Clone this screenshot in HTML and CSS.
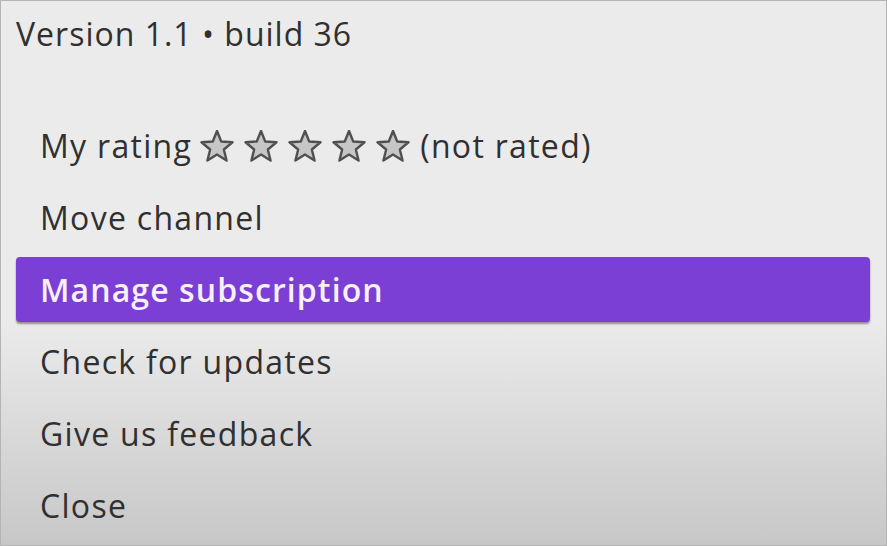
FILE: index.html
```html
<!DOCTYPE html>
<html>
<head>
<meta charset="utf-8">
<link rel="stylesheet" href="styles.css">
</head>
<body>
<div class="screen">
  <div class="version">Version 1.1 • build 36</div>
  <ul class="menu">
    <li class="item"><span>My rating</span><span class="stars"><svg class="star" viewBox="0 0 34 32"><path d="M17 1 L21.23 11.48 L32.5 12.26 L23.85 19.52 L26.58 30.49 L17 24.5 L7.42 30.49 L10.15 19.52 L1.5 12.26 L12.77 11.48 Z"/></svg><svg class="star" viewBox="0 0 34 32"><path d="M17 1 L21.23 11.48 L32.5 12.26 L23.85 19.52 L26.58 30.49 L17 24.5 L7.42 30.49 L10.15 19.52 L1.5 12.26 L12.77 11.48 Z"/></svg><svg class="star" viewBox="0 0 34 32"><path d="M17 1 L21.23 11.48 L32.5 12.26 L23.85 19.52 L26.58 30.49 L17 24.5 L7.42 30.49 L10.15 19.52 L1.5 12.26 L12.77 11.48 Z"/></svg><svg class="star" viewBox="0 0 34 32"><path d="M17 1 L21.23 11.48 L32.5 12.26 L23.85 19.52 L26.58 30.49 L17 24.5 L7.42 30.49 L10.15 19.52 L1.5 12.26 L12.77 11.48 Z"/></svg><svg class="star" viewBox="0 0 34 32"><path d="M17 1 L21.23 11.48 L32.5 12.26 L23.85 19.52 L26.58 30.49 L17 24.5 L7.42 30.49 L10.15 19.52 L1.5 12.26 L12.77 11.48 Z"/></svg></span><span>(not rated)</span></li>
    <li class="item">Move channel</li>
    <li class="item selected">Manage subscription</li>
    <li class="item">Check for updates</li>
    <li class="item">Give us feedback</li>
    <li class="item">Close</li>
  </ul>
</div>
</body>
</html>
```

FILE: styles.css
```css
* { box-sizing: border-box; }
html, body { margin: 0; padding: 0; }
body { width: 887px; height: 546px; overflow: hidden; }
.screen {
  width: 887px;
  height: 546px;
  border: 1px solid #b4b4b4;
  background: linear-gradient(to bottom, #ebebeb 0px, #ebebeb 320px, #c7c7c7 545px);
  font-family: "Open Sans", "Liberation Sans", sans-serif;
  color: #303030;
  padding: 0 16px 0 15px;
}
.version {
  height: 64px;
  display: flex;
  align-items: center;
  font-size: 32px;
  letter-spacing: 1px;
}
.menu {
  list-style: none;
  margin: 48px 0 0 0;
  padding: 0;
  display: flex;
  flex-direction: column;
  gap: 7px;
}
.item {
  height: 65px;
  display: flex;
  align-items: center;
  padding-left: 24px;
  font-size: 32px;
  letter-spacing: 1.3px;
  border-radius: 4px;
}
.selected {
  background: #7b3fd6;
  color: #f6f0fa;
  font-weight: 600;
  letter-spacing: 1.1px;
  padding-bottom: 1px;
  box-shadow: 0 2px 2px rgba(60, 50, 70, 0.5);
}
.stars {
  display: inline-flex;
  gap: 10px;
  margin: 0 10px 0 8px;
}
.star {
  width: 34px;
  height: 32px;
  display: block;
}
.star path {
  fill: #c6c6c6;
  stroke: #505050;
  stroke-width: 2.4;
  stroke-linejoin: round;
}
```
